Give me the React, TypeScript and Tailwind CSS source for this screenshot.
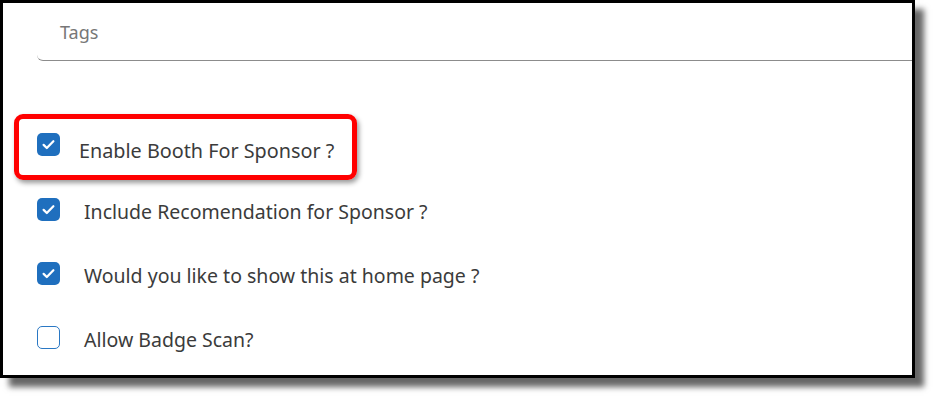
import React from 'react';

const font = { fontFamily: '"Noto Sans", "Open Sans", sans-serif' };

function Check({ checked }: { checked: boolean }) {
  if (!checked) {
    return <div className="w-[23px] h-[23px] shrink-0 rounded-[5px] border-[1.5px] border-[#2a78c4] bg-white" />;
  }
  return (
    <div className="w-[23px] h-[23px] shrink-0 rounded-[5px] bg-[#1f6fbe] flex items-center justify-center">
      <svg width="15" height="15" viewBox="0 0 16 16" fill="none">
        <path d="M2.8 8.4l3.4 3.3 7-7.2" stroke="white" strokeWidth="2.4" strokeLinecap="round" strokeLinejoin="round" />
      </svg>
    </div>
  );
}

function Row({ label, checked }: { label: string; checked: boolean }) {
  return (
    <div className="flex items-center h-[23px] ml-[34px]">
      <Check checked={checked} />
      <span className="ml-[24px] mt-[5px] text-[19.5px] leading-none text-[#3b3b3b] whitespace-nowrap">{label}</span>
    </div>
  );
}

export default function App() {
  return (
    <div className="w-[940px] h-[404px] bg-white" style={font}>
      <div className="w-[915px] h-[378px] border-[3px] border-black bg-white overflow-hidden shadow-[9px_9px_6px_rgba(0,0,0,0.6)]">
        <div className="ml-[34px] h-[58px] border-b border-[#8c8c8c] rounded-bl-[6px] flex items-center pl-[23px]">
          <span className="text-[18px] text-[#777] leading-none">Tags</span>
        </div>

        <div className="mt-[53px] ml-[11px] w-[343px] h-[66px] border-[5px] border-[#ff0000] rounded-[9px] shadow-[2px_3px_5px_rgba(0,0,0,0.4)] flex items-start pt-[14px] pl-[18px]">
          <Check checked />
          <span className="ml-[19px] mt-[8px] text-[19.8px] leading-none text-[#3b3b3b] whitespace-nowrap">Enable Booth For Sponsor ?</span>
        </div>

        <div className="mt-[18px] flex flex-col gap-[41px]">
          <Row label="Include Recomendation for Sponsor ?" checked />
          <Row label="Would you like to show this at home page ?" checked />
          <Row label="Allow Badge Scan?" checked={false} />
        </div>
      </div>
    </div>
  );
}
